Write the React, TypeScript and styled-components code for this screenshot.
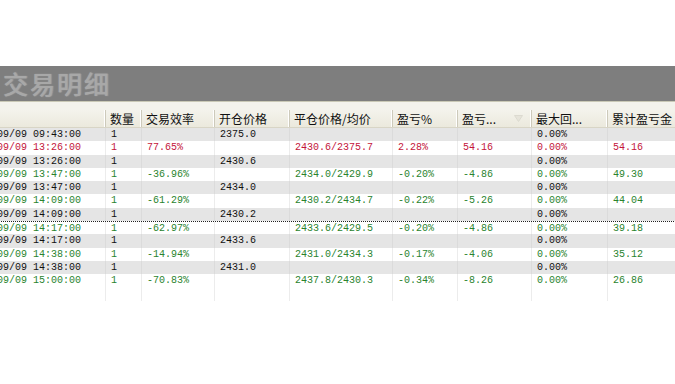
import styled, { createGlobalStyle } from 'styled-components';

type Tone = 'black' | 'red' | 'green';

interface Trade {
  time: string;
  qty: string;
  eff: string;
  open: string;
  close: string;
  pct: string;
  pnl: string;
  drawdown: string;
  total: string;
  tone: Tone;
}

const columns = ['', '数量', '交易效率', '开仓价格', '平仓价格/均价', '盈亏%', '盈亏...', '最大回...', '累计盈亏金'];

const openRow = (time: string, open: string): Trade => ({
  time, qty: '1', eff: '', open, close: '', pct: '', pnl: '', drawdown: '0.00%', total: '', tone: 'black',
});

const closeRow = (
  time: string, eff: string, close: string, pct: string, pnl: string, total: string, tone: Tone,
): Trade => ({ time, qty: '1', eff, open: '', close, pct, pnl, drawdown: '0.00%', total, tone });

const trades: Trade[] = [
  openRow('09/09 09:43:00', '2375.0'),
  closeRow('09/09 13:26:00', '77.65%', '2430.6/2375.7', '2.28%', '54.16', '54.16', 'red'),
  openRow('09/09 13:26:00', '2430.6'),
  closeRow('09/09 13:47:00', '-36.96%', '2434.0/2429.9', '-0.20%', '-4.86', '49.30', 'green'),
  openRow('09/09 13:47:00', '2434.0'),
  closeRow('09/09 14:09:00', '-61.29%', '2430.2/2434.7', '-0.22%', '-5.26', '44.04', 'green'),
  openRow('09/09 14:09:00', '2430.2'),
  closeRow('09/09 14:17:00', '-62.97%', '2433.6/2429.5', '-0.20%', '-4.86', '39.18', 'green'),
  openRow('09/09 14:17:00', '2433.6'),
  closeRow('09/09 14:38:00', '-14.94%', '2431.0/2434.3', '-0.17%', '-4.06', '35.12', 'green'),
  openRow('09/09 14:38:00', '2431.0'),
  closeRow('09/09 15:00:00', '-70.83%', '2437.8/2430.3', '-0.34%', '-8.26', '26.86', 'green'),
];

const toneColor: Record<Tone, string> = {
  black: '#111111',
  red: '#c4143a',
  green: '#2a842e',
};

const GlobalStyle = createGlobalStyle`
  html, body {
    margin: 0;
    padding: 0;
    background: #ffffff;
    overflow: hidden;
  }
`;

const App = () => (
  <>
    <GlobalStyle />
    <Page>
      <TitleBar>
        <Title>交易明细</Title>
      </TitleBar>
      <Gap />
      <Table>
        <HeaderRow>
          {columns.map((col, i) => (
            <HeadCell key={i}>
              {col}
              {i === 6 && (
                <SortMark viewBox="0 0 9 7">
                  <path d="M0.5 0.5 L8.5 0.5 L4.5 6.5 Z" fill="#e6e4da" stroke="#dcdad0" />
                </SortMark>
              )}
            </HeadCell>
          ))}
        </HeaderRow>
        {trades.map((t, i) => (
          <Row key={i} striped={t.tone === 'black'} focused={i === 7} tone={t.tone}>
            <Cell>{t.time}</Cell>
            <Cell>{t.qty}</Cell>
            <Cell>{t.eff}</Cell>
            <Cell>{t.open}</Cell>
            <Cell>{t.close}</Cell>
            <Cell>{t.pct}</Cell>
            <Cell>{t.pnl}</Cell>
            <Cell>{t.drawdown}</Cell>
            <Cell>{t.total}</Cell>
          </Row>
        ))}
        <FillerRow>
          {columns.map((_, i) => (
            <Cell key={i} />
          ))}
        </FillerRow>
      </Table>
    </Page>
  </>
);

export default App;

const gridCols = '114px 36px 73px 75px 103px 65px 74px 76px 1fr';

const Page = styled.div`
  width: 675px;
  height: 384px;
  padding-top: 66px;
  box-sizing: border-box;
  overflow: hidden;
  background: #ffffff;
`;

const TitleBar = styled.div`
  height: 35px;
  background: #7e7e7e;
  display: flex;
  align-items: center;
  padding-left: 3px;
  border-bottom: 1px solid #c9c8b6;
`;

const Title = styled.div`
  font-family: 'Noto Sans CJK SC', sans-serif;
  font-size: 25px;
  font-weight: 500;
  letter-spacing: 2px;
  color: #a8a8a8;
  text-shadow: 0 0 1px #a0a0a0, 1px 0 1px #969696;
  line-height: 1;
`;

const Gap = styled.div`
  height: 8px;
  background: #f3f2ec;
`;

const Table = styled.div`
  margin-left: -8px;
  width: 700px;
  font-family: 'Liberation Mono', monospace;
  font-size: 10px;
`;

const HeaderRow = styled.div`
  display: grid;
  grid-template-columns: ${gridCols};
  height: 17px;
  background: linear-gradient(#f4f3ec, #ebe9dd);
  border-bottom: 1px solid #d8d5c6;
`;

const HeadCell = styled.div`
  position: relative;
  display: flex;
  align-items: center;
  padding-left: 4px;
  font-family: 'Noto Sans CJK SC', sans-serif;
  font-size: 12px;
  color: #111111;
  border-right: 1px solid #cdcabb;
  box-shadow: inset -1px 0 0 #ffffff;
  white-space: nowrap;
  overflow: hidden;
`;

const SortMark = styled.svg`
  position: absolute;
  right: 8px;
  top: 5px;
  width: 9px;
  height: 7px;
`;

interface RowProps {
  striped: boolean;
  focused: boolean;
  tone: Tone;
}

const Row = styled.div<RowProps>`
  display: grid;
  grid-template-columns: ${gridCols};
  height: 13.3px;
  line-height: 13px;
  box-sizing: border-box;
  background: ${({ striped }) => (striped ? '#e5e5e5' : '#ffffff')};
  color: ${({ tone }) => toneColor[tone]};
  border-top: ${({ focused }) => (focused ? '1px dotted #222222' : '0')};
`;

const Cell = styled.div`
  padding-left: 5px;
  white-space: nowrap;
  overflow: hidden;
  border-right: 1px solid rgba(200, 200, 200, 0.35);
`;

const FillerRow = styled.div`
  display: grid;
  grid-template-columns: ${gridCols};
  height: 13px;
`;
